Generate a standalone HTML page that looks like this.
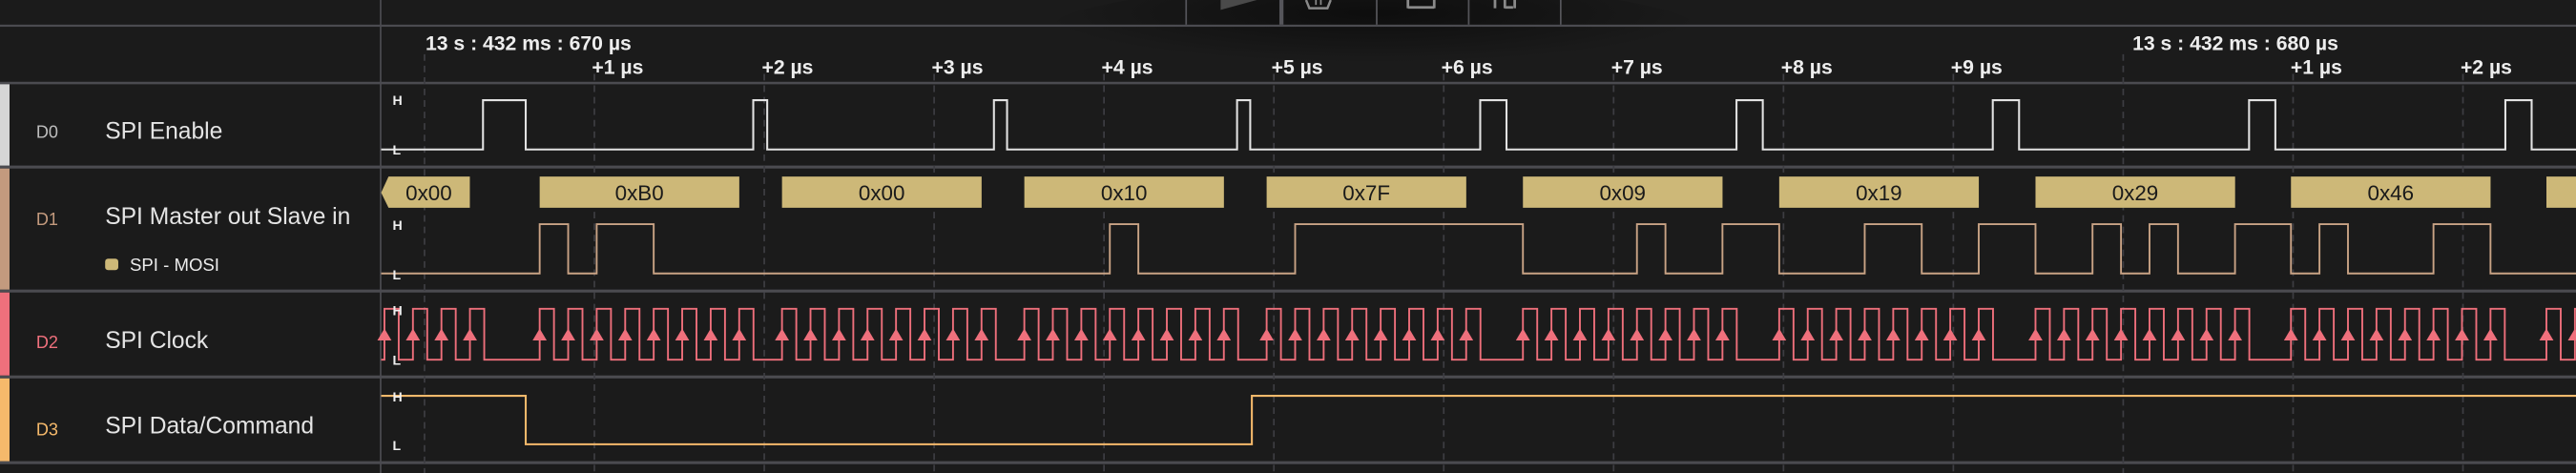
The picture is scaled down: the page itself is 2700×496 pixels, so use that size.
<!DOCTYPE html>
<html><head><meta charset="utf-8"><style>
html,body{margin:0;padding:0;background:#1b1b1b;width:2700px;height:496px;overflow:hidden}
svg{display:block}
text{font-family:"Liberation Sans",sans-serif}
</style></head><body>
<svg id="s" width="2700" height="496" viewBox="0 0 1568 288" preserveAspectRatio="none" xmlns="http://www.w3.org/2000/svg">
<defs>
<radialGradient id="sh" cx="0.5" cy="0.3" r="0.5"><stop offset="0" stop-color="#0c0c0c" stop-opacity="0.9"/><stop offset="1" stop-color="#0c0c0c" stop-opacity="0"/></radialGradient>
</defs>
<rect width="1568" height="288" fill="#1b1b1b"/>
<ellipse cx="836" cy="20" rx="200" ry="30" fill="url(#sh)"/>
<!-- toolbar -->
<g stroke="#55555a" stroke-width="1">
<line x1="722" y1="0" x2="722" y2="15"/><line x1="780" y1="0" x2="780" y2="15" stroke-width="2.5"/>
<line x1="838" y1="0" x2="838" y2="15"/><line x1="894" y1="0" x2="894" y2="15"/><line x1="950" y1="0" x2="950" y2="15"/>
</g>
<polygon points="743,0 765,0 743,6" fill="#4a4a4a"/>
<path d="M795,0 L797,5 H808 L810,0" fill="none" stroke="#8a8a8a" stroke-width="1.4"/>
<path d="M801,0 V3 M804,0 V3" stroke="#8a8a8a" stroke-width="1"/>
<path d="M857,0 V5 M873,0 V5 M857,4.5 H873" fill="none" stroke="#8a8a8a" stroke-width="1.6"/>
<path d="M910,0 V5 M916,0 V5 M916,4.5 H921 M922,0 V5" fill="none" stroke="#8a8a8a" stroke-width="1.6"/>
<!-- separators -->
<g fill="#4b4b50">
<rect x="0" y="15" width="1568" height="1.3"/>
<rect x="0" y="49.8" width="1568" height="1.5"/>
<rect x="0" y="100.8" width="1568" height="1.8"/>
<rect x="0" y="176.3" width="1568" height="1.8"/>
<rect x="0" y="228.6" width="1568" height="1.8"/>
<rect x="0" y="280.8" width="1568" height="1.8"/>
<rect x="231.2" y="0" width="1" height="288"/>
</g>
<!-- channel bars -->
<rect x="0" y="51.3" width="5.8" height="49.5" fill="#d6d6d6"/>
<rect x="0" y="102.6" width="5.8" height="73.7" fill="#c39a7e"/>
<rect x="0" y="178.1" width="5.8" height="50.5" fill="#ef707c"/>
<rect x="0" y="230.4" width="5.8" height="50.4" fill="#f5b96b"/>
<!-- labels -->
<g font-size="10.5">
<text x="22" y="84" fill="#bdbdbd">D0</text>
<text x="22" y="137" fill="#c39a7e">D1</text>
<text x="22" y="212" fill="#ef707c">D2</text>
<text x="22" y="265" fill="#f5b96b">D3</text>
</g>
<g font-size="14.3" fill="#e4e4e4">
<text x="64" y="84.5">SPI Enable</text>
<text x="64" y="136.5">SPI Master out Slave in</text>
<text x="64" y="212">SPI Clock</text>
<text x="64" y="264">SPI Data/Command</text>
</g>
<rect x="64" y="157.5" width="8" height="7" rx="1.8" fill="#cdb878"/>
<text x="79" y="165" font-size="10.8" fill="#ececec">SPI - MOSI</text>
<g id="grid"></g>
<g id="ruler" font-size="12.3" font-weight="bold" fill="#ededed"></g>
<text x="259" y="30.5" font-size="12.3" font-weight="bold" fill="#ededed">13 s : 432 ms : 670 µs</text>
<text x="1298" y="30.5" font-size="12.3" font-weight="bold" fill="#ededed">13 s : 432 ms : 680 µs</text>
<g id="boxes"></g>
<polygon points="232,117.3 236.5,107.5 286,107.5 286,126.5 236.5,126.5" fill="#cdb878"/>
<text x="261" y="121.8" font-size="13" fill="#1a1a1a" text-anchor="middle">0x00</text>
<!-- waveforms -->
<path id="d0" fill="none" stroke="#e2e2e2" stroke-width="1.2"/>
<path id="d1" fill="none" stroke="#c9a385" stroke-width="1.1"/>
<path id="d2" fill="none" stroke="#ee6f7b" stroke-width="1.1"/>
<g id="arr" fill="#ef707c"></g>
<path d="M232,241 H320 V270.5 H762 V241 H1568" fill="none" stroke="#f5b96b" stroke-width="1.2"/>
<!-- H/L -->
<g font-size="8.2" font-weight="bold" fill="#f0f0f0">
<text x="239" y="64">H</text><text x="239" y="94">L</text>
<text x="239" y="140">H</text><text x="239" y="170">L</text>
<text x="239" y="192">H</text><text x="239" y="222">L</text>
<text x="239" y="244.5">H</text><text x="239" y="274">L</text>
</g>
</svg>
<script>
var N="http://www.w3.org/2000/svg";
function el(t,a,p,txt){var e=document.createElementNS(N,t);for(var k in a)e.setAttribute(k,a[k]);if(txt)e.textContent=txt;document.getElementById(p).appendChild(e);return e;}
// grid
for(var n=0;n<=12;n++){var x=258.4+103.4*n;var y0=(n==0||n==10)?33:45;
el('line',{x1:x,y1:y0,x2:x,y2:288,stroke:'#3d3d42','stroke-width':1,'stroke-dasharray':'4,3'},'grid');
if(n!=0&&n!=10){var m=n>10?n-10:n;el('text',{x:x-1.5,y:45},'ruler','+'+m+' µs');}}
var s=[164.6,328.5,476,623.5,771,927,1083,1239,1394.5,1550];
var v=[0x00,0xB0,0x00,0x10,0x7F,0x09,0x19,0x29,0x46,0x00];
var names=['','0xB0','0x00','0x10','0x7F','0x09','0x19','0x29','0x46','0x5A'];
var p=17.35,hi=8.7;
var c='M232,219',d='M232,166.5',cur=0;
for(var i=0;i<s.length;i++){
 if(i>0){el('rect',{x:s[i],y:107.5,width:121.5,height:19,fill:'#cdb878'},'boxes');
 el('text',{x:s[i]+60.7,y:121.8,'font-size':13,fill:'#1a1a1a','text-anchor':'middle'},'boxes',names[i]);}
 for(var k=0;k<8;k++){var x=s[i]+k*p;var b=(v[i]>>(7-k))&1;
  if(x<232){cur=b;continue;}
  c+=' H'+x.toFixed(2)+' V188 H'+(x+hi).toFixed(2)+' V219';
  el('polygon',{points:(x-4.3)+',207.3 '+(x+4.3)+',207.3 '+x+',200'},'arr');
  if(b!=cur){d+=' H'+x.toFixed(2)+' V'+(b?136.5:166.5);cur=b;}
 }
}
c+=' H1568';d+=' H1568';
document.getElementById('d2').setAttribute('d',c);
document.getElementById('d1').setAttribute('d',d);
var pul=[[294,320],[458.5,467],[605,613],[753,761],[901,917],[1057,1073],[1213,1229],[1369,1385],[1525,1541]];
var e='M232,91';pul.forEach(function(q){e+=' H'+q[0]+' V61 H'+q[1]+' V91';});e+=' H1568';
document.getElementById('d0').setAttribute('d',e);
</script>
</body></html>
